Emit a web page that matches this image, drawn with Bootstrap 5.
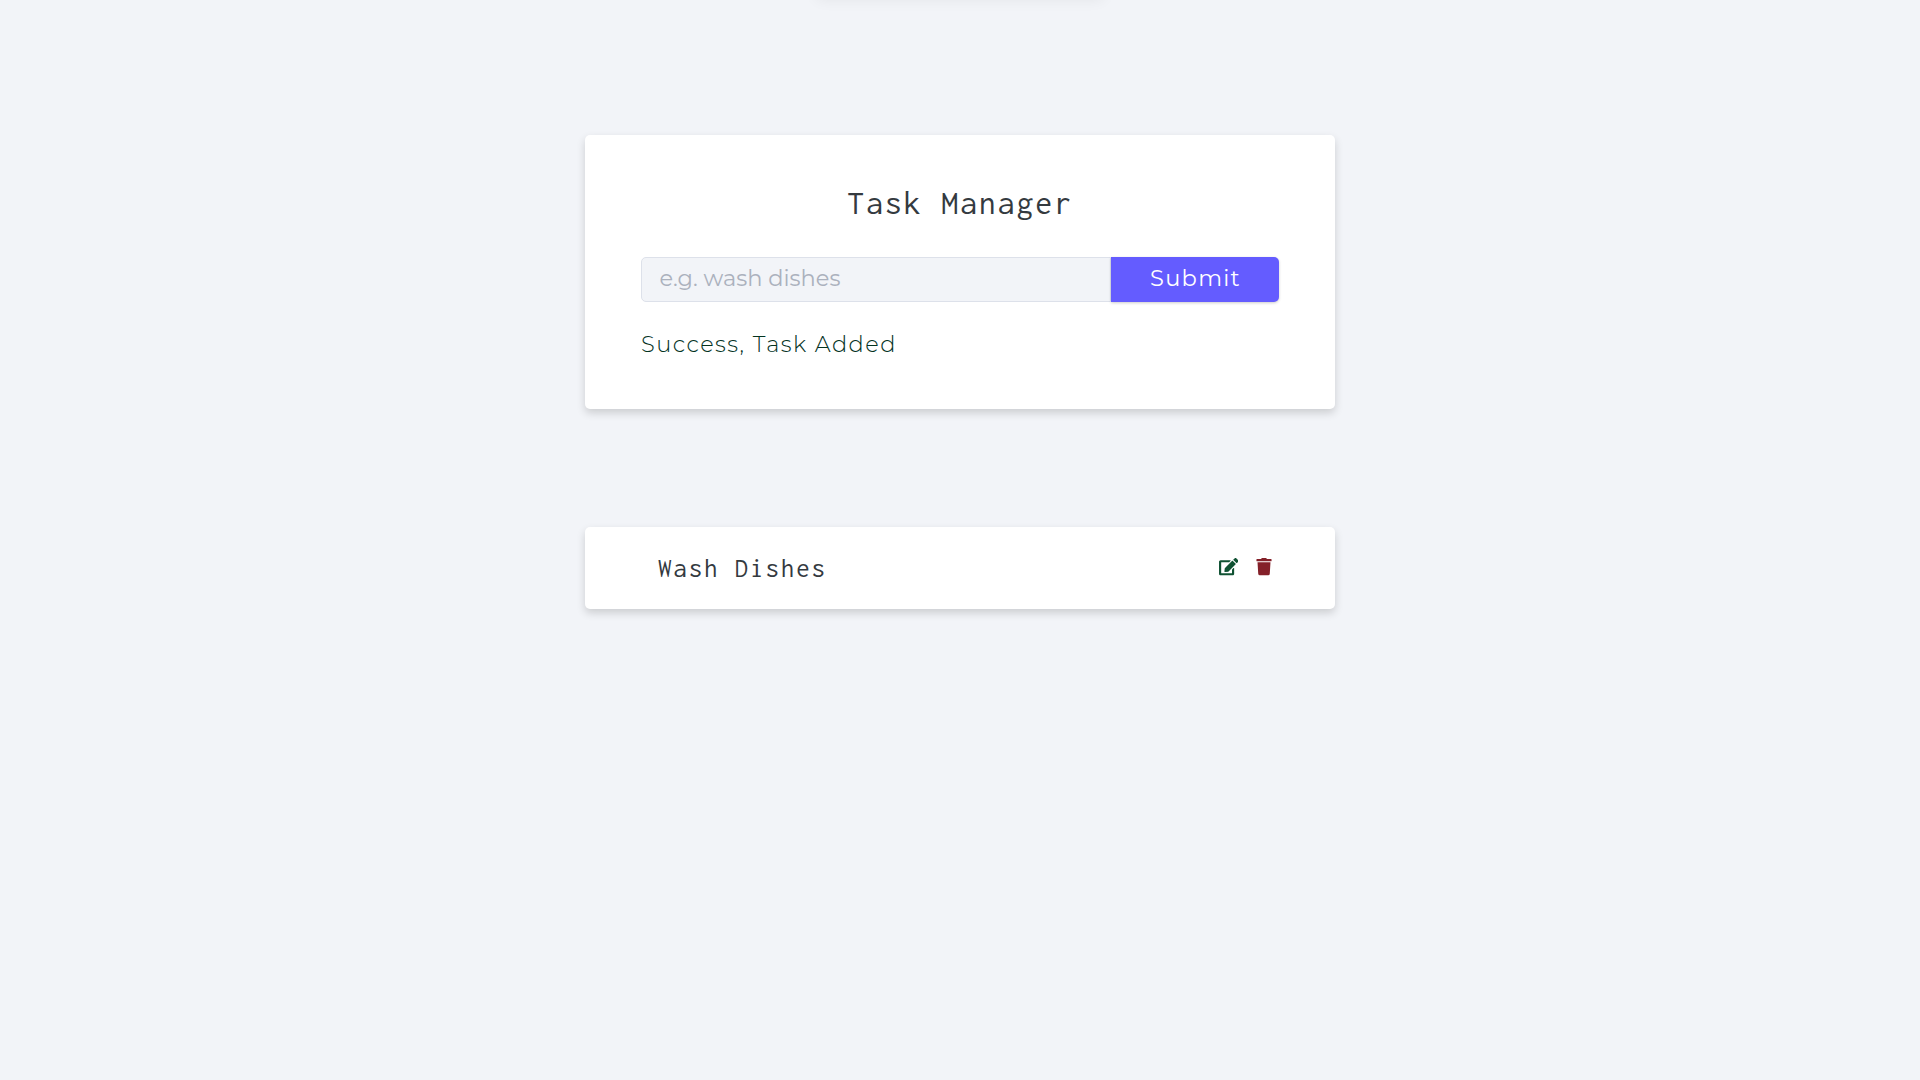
<!DOCTYPE html>
<html lang="en">
<head>
<meta charset="utf-8">
<meta name="viewport" content="width=device-width, initial-scale=1">
<title>Task Manager</title>
<link href="https://cdn.jsdelivr.net/npm/bootstrap@5.3.0/dist/css/bootstrap.min.css" rel="stylesheet">
<style>
body { background: #f2f4f8; color: #343a3f; font-family: Montserrat, Inter, sans-serif; min-height: 100vh; overflow: hidden; }
.toast-edge { position: absolute; top: -63px; left: 50%; width: 286px; height: 60px; margin-left: -143px; box-shadow: 0 2px 14px rgba(0,0,0,.07); }
.panel { width: 750px; border-radius: 5px; box-shadow: 0 4px 8px rgba(0,0,0,.16); }
.task-form { margin-top: 135px; height: 274px; padding: 48px 56px 0; }
.task-form h1, .task-name { font-family: Inconsolata, "Liberation Mono", monospace; font-weight: 400; color: #343a3f; }
.task-form h1 { font-size: 34px; line-height: 40px; letter-spacing: 1.8px; margin-bottom: 34px; }
.entry { height: 45px; }
.entry .form-control { width: 470px; flex: none; background: #f2f4f8; border: 1px solid #dde1ea; border-radius: 5px 0 0 5px; padding: 0 18px 2px 17.5px; font-size: 22.5px; letter-spacing: 0; }
.entry .form-control::placeholder { color: #abb1bd; opacity: 1; }
.entry .btn { width: 168px; background: #645cff; color: #fff; border: 0; border-radius: 0 5px 5px 0; padding: 0 0 2px 1px; font-size: 22.5px; font-weight: 400; letter-spacing: 1.3px; box-shadow: 0 1px 3px rgba(0,0,0,.2); }
.status { font-size: 22.5px; line-height: 30px; letter-spacing: 1.46px; font-weight: 300; color: #04331f; margin: 27px 0 0; }
.task-row { margin-top: 118px; height: 82px; padding: 0 62px 0 73px; }
.task-name { font-size: 27px; line-height: 32px; letter-spacing: 1.85px; }
.row-actions { padding-bottom: 2px; gap: 17px; }
</style>
</head>
<body>
<div class="toast-edge"></div>
<main class="d-flex flex-column align-items-center">
  <form class="panel task-form bg-white">
    <h1 class="text-center">Task Manager</h1>
    <div class="entry d-flex">
      <input class="form-control" type="text" placeholder="e.g. wash dishes">
      <button class="btn" type="button">Submit</button>
    </div>
    <p class="status">Success, Task Added</p>
  </form>
  <section class="panel task-row bg-white d-flex align-items-center justify-content-between">
    <span class="task-name">Wash Dishes</span>
    <div class="row-actions d-flex align-items-center">
      <svg width="19.500" height="17.300" viewBox="0 0 576 512" fill="#0f5132"><path d="M402.600 83.200l90.200 90.200c3.800 3.800 3.800 10 0 13.800L274.400 405.600l-92.800 10.300c-12.400 1.400-22.900-9.100-21.500-21.500l10.300-92.800L388.800 83.200c3.800-3.800 10-3.800 13.800 0zm162-22.900l-48.800-48.800c-15.200-15.200-39.900-15.200-55.200 0l-35.400 35.400c-3.800 3.800-3.800 10 0 13.800l90.200 90.200c3.800 3.800 10 3.800 13.800 0l35.400-35.400c15.200-15.300 15.200-40 0-55.200zM384 346.200V448H64V128h229.800c3.200 0 6.200-1.300 8.500-3.500l40-40c7.600-7.600 2.200-20.500-8.500-20.500H48C21.500 64 0 85.500 0 112v352c0 26.500 21.500 48 48 48h352c26.500 0 48-21.500 48-48V306.200c0-10.700-12.900-16-20.500-8.500l-40 40c-2.200 2.300-3.500 5.300-3.500 8.500z"/></svg>
      <svg width="18" height="17.300" viewBox="0 0 448 512" fill="#842029"><path d="M432 32H312l-9.400-18.700A24 24 0 0 0 281.100 0H166.800a23.700 23.700 0 0 0-21.400 13.300L136 32H16A16 16 0 0 0 0 48v32a16 16 0 0 0 16 16h416a16 16 0 0 0 16-16V48a16 16 0 0 0-16-16zM53.200 467a48 48 0 0 0 47.900 45h245.800a48 48 0 0 0 47.900-45L416 128H32z"/></svg>
    </div>
  </section>
</main>
<script src="https://cdn.jsdelivr.net/npm/bootstrap@5.3.0/dist/js/bootstrap.bundle.min.js"></script>
</body>
</html>
